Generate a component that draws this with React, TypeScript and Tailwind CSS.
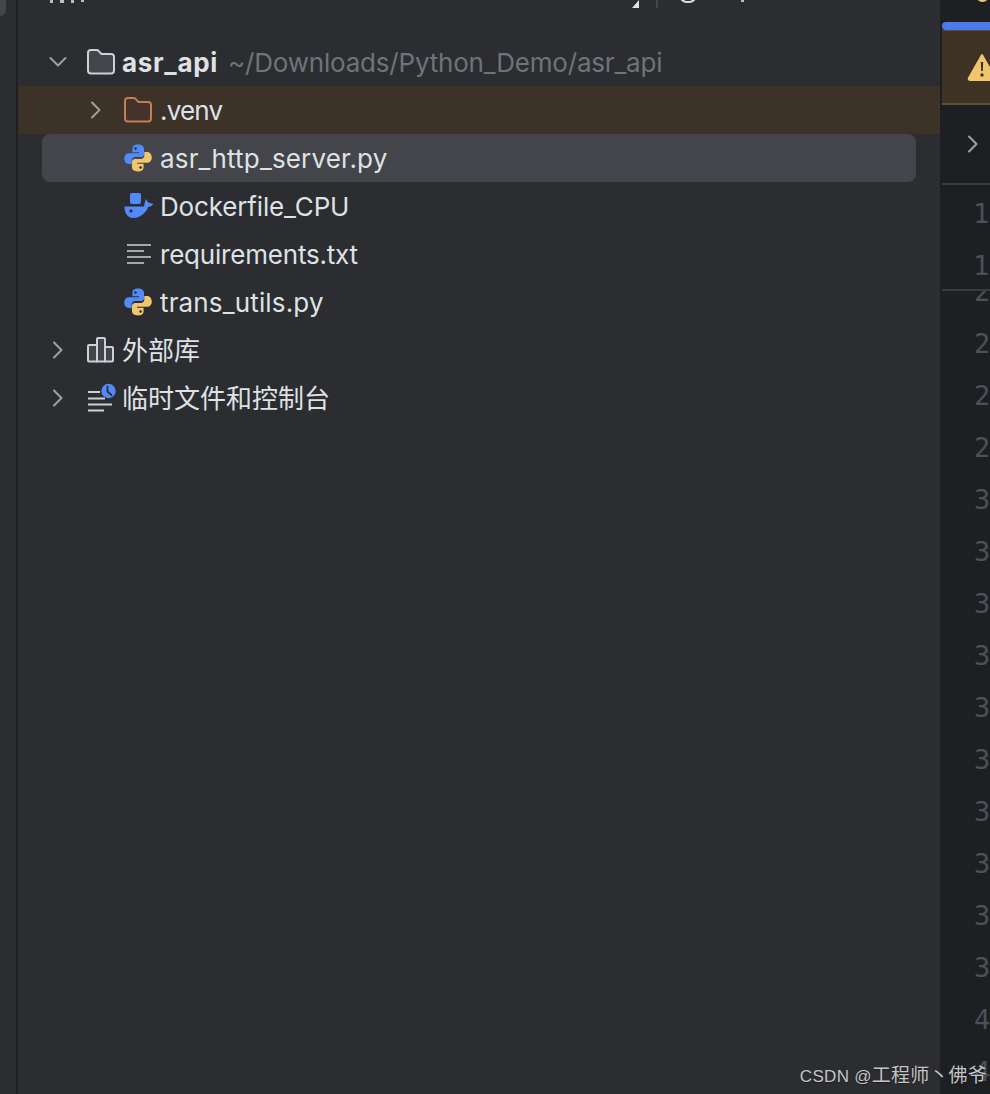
const FONT = "font-['Inter','Noto_Sans_CJK_SC',sans-serif]";

const Chevron = ({ open }: { open?: boolean }) => (
  <svg width="20" height="20" viewBox="0 0 20 20" fill="none" stroke="#9da0a8" strokeWidth="2" strokeLinecap="round" strokeLinejoin="round">
    {open ? <path d="M2.5 6 L10 13.5 L17.5 6" /> : <path d="M6 2.5 L13.5 10 L6 17.5" />}
  </svg>
);

const Folder = ({ stroke, fill }: { stroke: string; fill: string }) => (
  <svg width="28" height="26" viewBox="0 0 28 26" fill={fill} stroke={stroke} strokeWidth="2" strokeLinejoin="round">
    <path d="M1 4 C1 2.3 2.3 1 4 1 H9.5 C10.5 1 11.2 1.4 11.8 2.1 L14.5 5 H24 C25.7 5 27 6.3 27 8 V21.5 C27 23.2 25.7 24.5 24 24.5 H4 C2.3 24.5 1 23.2 1 21.5 Z" />
  </svg>
);

const PY_HALF =
  "M12.2 0.4 C8.6 0.4 7.2 1.8 7.2 4.2 V7 H12.8 V8 H4.2 C1.7 8 0.2 9.8 0.2 12.3 C0.2 15 1.7 17.2 4.2 17.2 H6.6 V14.2 C6.6 12.3 8 11.2 9.6 11.2 H14.6 C16.1 11.2 17.2 10 17.2 8.5 V4.2 C17.2 2 15.2 0.4 12.2 0.4 Z";

const PythonIcon = () => (
  <svg width="28" height="28" viewBox="0 0 24 24">
    <path d={PY_HALF} fill="#548af7" />
    <circle cx="9.8" cy="3.8" r="1.1" fill="#2b2d30" />
    <g transform="rotate(180 12 12)">
      <path d={PY_HALF} fill="#efc56e" />
      <circle cx="9.8" cy="3.8" r="1.1" fill="#2b2d30" />
    </g>
  </svg>
);

const DockerIcon = () => (
  <svg width="30" height="26" viewBox="0 0 30 26" fill="#548af7">
    <rect x="6" y="0" width="11" height="11" rx="2" />
    <path d="M0.5 13.5 H20 C20.3 11 21 8.5 22 6 L24.2 9.6 L29.5 11 C27.8 13 25.8 14 24.2 14 C22 20 16 25 9 25 C3.5 25 0.5 20 0.5 13.5 Z" />
    <circle cx="7" cy="18" r="1.6" fill="#2b2d30" />
  </svg>
);

const TextIcon = () => (
  <svg width="26" height="22" viewBox="0 0 26 22" stroke="#ced0d6" strokeWidth="1.7" fill="none">
    <path d="M1 2 H25 M1 8 H18 M1 14 H25 M1 20 H18" />
  </svg>
);

const LibraryIcon = () => (
  <svg width="27" height="26" viewBox="0 0 27 26" fill="#43454a" stroke="#ced0d6" strokeWidth="2" strokeLinejoin="round">
    <path d="M2 8 H10 V24.5 H2 C1.4 24.5 1 24.1 1 23.5 V9 C1 8.4 1.4 8 2 8 Z" />
    <path d="M10 2 C10 1.4 10.4 1 11 1 H17 C17.6 1 18 1.4 18 2 V24.5 H10 Z" />
    <path d="M18 10 H25 C25.6 10 26 10.4 26 11 V23.5 C26 24.1 25.6 24.5 25 24.5 H18 Z" />
  </svg>
);

const ScratchIcon = () => (
  <svg width="30" height="30" viewBox="0 0 30 30" fill="none">
    <path d="M1 9 H13 M1 15.5 H18 M1 21.5 H25 M1 27.5 H17" stroke="#ced0d6" strokeWidth="2" />
    <circle cx="21.5" cy="8" r="7.2" fill="#548af7" />
    <path d="M20.5 3.5 V8.5 L24.5 12" stroke="#2b2d30" strokeWidth="1.8" strokeLinecap="round" strokeLinejoin="round" />
  </svg>
);

const rowText = "pt-[2px] text-[26px] leading-[48px] text-[#dfe1e5] whitespace-nowrap";

const Row = ({ nested, open, icon, children }: { nested?: boolean; open?: boolean; icon: React.ReactNode; children: React.ReactNode }) => (
  <div className="flex h-12 items-center">
    <div className={nested ? "flex w-[106px] shrink-0 items-center pl-[68px]" : "flex w-[69px] shrink-0 items-center pl-[30px]"}>
      {open !== undefined && <Chevron open={open} />}
    </div>
    <div className={nested ? "flex w-[36px] shrink-0 justify-start" : "flex w-[35px] shrink-0 justify-start"}>{icon}</div>
    {children}
  </div>
);

const LINE_DIGITS = ["2", "2", "2", "2", "3", "3", "3", "3", "3", "3", "3", "3", "3", "3", "4", "4"];

const Gutter = () => (
  <div className="flex h-full w-[50px] shrink-0 flex-col overflow-hidden bg-[#1e1f22] font-['DejaVu_Sans_Mono',monospace] text-[27px] text-[#4b5059]">
    <div className="h-[22px] shrink-0 pl-[37px]">
      <div className="-mt-[8px] h-[10px] w-[11px] rounded-full bg-[#efc56e]" />
    </div>
    <div className="ml-[2px] h-[8px] shrink-0 rounded-l-full bg-[#4a7bea]" />
    <div className="ml-[2px] flex h-[75px] shrink-0 items-center border-t border-b-2 border-t-[#5a4b33] border-b-[#5f503a] bg-[#3d3224] pl-[25px]">
      <svg width="30" height="28" viewBox="0 0 30 28" className="shrink-0">
        <path d="M15 2 L28 25 C28.6 26.2 28 27 26.8 27 H3.2 C2 27 1.4 26.2 2 25 Z" fill="#efc56e" stroke="#efc56e" strokeWidth="2" strokeLinejoin="round" />
        <path d="M13.8 9 H16.2 L15.8 18 H14.2 Z" fill="#3d3224" />
        <circle cx="15" cy="22" r="1.7" fill="#3d3224" />
      </svg>
    </div>
    <div className="relative z-10 ml-[2px] flex h-[80px] shrink-0 items-center border-b-2 border-[#393b40] bg-[#1e1f22] pl-[21px]">
      <Chevron />
    </div>
    <div className="relative z-10 ml-[2px] h-[106px] shrink-0 border-b-2 border-[#393b40] bg-[#1e1f22] pl-[31px]">
      <div className="h-[52px] leading-[58px]">1</div>
      <div className="h-[52px] leading-[58px]">1</div>
    </div>
    <div className="-mt-[25px] pl-[34px]">
      {LINE_DIGITS.map((d, i) => (
        <div key={i} className="h-[52px] leading-[52px]">
          {d}
        </div>
      ))}
    </div>
  </div>
);

export default function App() {
  return (
    <div className={`relative flex h-[1094px] w-[990px] overflow-hidden bg-[#2b2d30] ${FONT}`}>
      {/* left tool strip */}
      <div className="h-full w-[18px] shrink-0 border-r-2 border-[#1e1f22]">
        <div className="h-4 w-[6px] rounded-br-md bg-[#43454a]" />
      </div>

      {/* project tree */}
      <div className="h-full min-w-0 flex-1">
        <div className="flex h-[38px] items-start overflow-hidden">
          <div className="ml-[32px] mt-0 flex gap-[7px]">
            <div className="h-[3px] w-[3px] bg-[#bcbec4]" />
            <div className="h-[3px] w-[4px] bg-[#bcbec4]" />
            <div className="h-[3px] w-[3px] bg-[#bcbec4]" />
            <div className="h-[2px] w-[3px] bg-[#bcbec4]" />
          </div>
          <svg width="8" height="8" viewBox="0 0 8 8" className="ml-[548px] shrink-0">
            <path d="M0 8 L7 0 V8 Z" fill="#dfe1e5" />
          </svg>
          <div className="ml-[16px] h-[8px] w-[2px] bg-[#43454a]" />
          <div className="ml-[21px] -mt-[13px] h-[16px] w-[18px] rounded-full border-2 border-[#dfe1e5]" />
          <div className="ml-[44px] h-[2px] w-[3px] bg-[#bcbec4]" />
        </div>

        <Row open icon={<Folder stroke="#ced0d6" fill="#43454a" />}>
          <span className={`${rowText} font-bold tracking-[0.7px]`}>asr_api</span>
          <span className={`${rowText} ml-[10px] tracking-[-0.2px] !text-[#6f737a]`}>~/Downloads/Python_Demo/asr_api</span>
        </Row>
        <div className="bg-[#3d3228]">
          <Row nested open={false} icon={<Folder stroke="#c27d5a" fill="#45322b" />}>
            <span className={`${rowText} tracking-[-0.8px]`}>.venv</span>
          </Row>
        </div>
        <div className="relative">
          <div className="absolute inset-y-0 left-[24px] right-[24px] rounded-lg bg-[#43454a]" />
          <div className="relative">
            <Row nested icon={<PythonIcon />}>
              <span className={`${rowText} tracking-[0.17px]`}>asr_http_server.py</span>
            </Row>
          </div>
        </div>
        <Row nested icon={<DockerIcon />}>
          <span className={`${rowText} tracking-[-0.15px]`}>Dockerfile_CPU</span>
        </Row>
        <Row nested icon={<div className="pl-[2px]"><TextIcon /></div>}>
          <span className={`${rowText} tracking-[-0.2px]`}>requirements.txt</span>
        </Row>
        <Row nested icon={<PythonIcon />}>
          <span className={`${rowText} tracking-[0.15px]`}>trans_utils.py</span>
        </Row>
        <Row open={false} icon={<LibraryIcon />}>
          <span className={rowText}>外部库</span>
        </Row>
        <Row open={false} icon={<ScratchIcon />}>
          <span className={rowText}>临时文件和控制台</span>
        </Row>
      </div>

      <Gutter />

      {/* CSDN watermark */}
      <div className="absolute right-[3px] bottom-[5px] z-20 text-[17px] leading-6 tracking-[0.3px] text-[#c4c5c7] [text-shadow:0_1px_1px_rgba(0,0,0,0.35)] font-['Liberation_Sans','Noto_Sans_CJK_SC',sans-serif]">
        CSDN @<span className="text-[19px] tracking-[0.2px]">工程师丶佛爷</span>
      </div>
    </div>
  );
}
